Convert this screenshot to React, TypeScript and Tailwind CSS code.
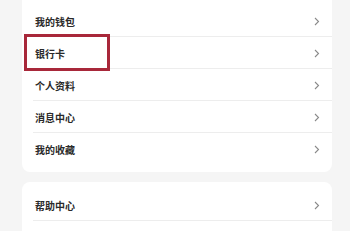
import React from 'react';

const font = { fontFamily: '"Noto Sans CJK SC", "Noto Sans", sans-serif' };

const Chevron = () => (
    <svg width="6" height="9" viewBox="0 0 6 9" fill="none" className="text-[#8a8a8a]">
        <path d="M1 1 L4.5 4.5 L1 8" stroke="currentColor" strokeWidth="1.1" />
    </svg>
);

const Row = ({ label, divider = true }: { label: string; divider?: boolean }) => (
    <div className="relative flex h-8 items-center justify-between pl-[13px] pr-[12px]">
        <span className="text-[10px] font-semibold text-[#2a2a2a]">{label}</span>
        <Chevron />
        {divider && <div className="absolute bottom-0 left-[11px] right-0 h-px bg-[#ededed]" />}
    </div>
);

const App = () => {
    const group1 = ['我的钱包', '银行卡', '个人资料', '消息中心', '我的收藏'];

    return (
        <div className="h-[231px] w-[350px] overflow-hidden bg-[#f5f5f5]" style={font}>
            <div className="ml-[22px] w-[310px]">
                <div className="relative -mt-2 rounded-lg bg-white pt-[13px] pb-[7px]">
                    {group1.map((label, i) => (
                        <Row key={label} label={label} divider={i < group1.length - 1} />
                    ))}
                    {/* highlight box around 银行卡 */}
                    <div className="absolute left-[2px] top-[42px] h-[37px] w-[86px] border-[3px] border-[#a8283a]" />
                </div>
                <div className="mt-[10px] rounded-lg bg-white pt-[7px]">
                    <Row label="帮助中心" />
                    <Row label="" divider={false} />
                </div>
            </div>
        </div>
    );
};

export default App;
